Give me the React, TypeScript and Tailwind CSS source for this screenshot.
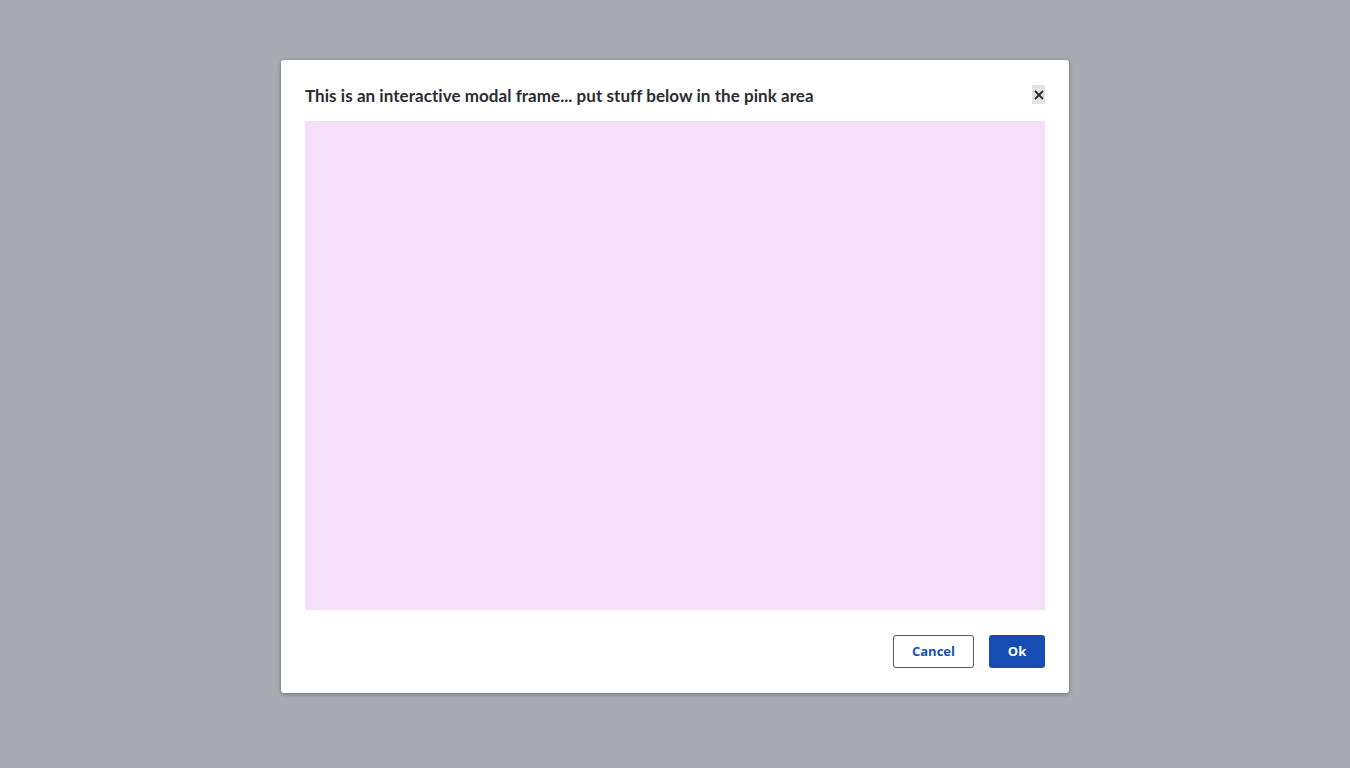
import React from "react";

export default function App() {
  return (
    <div className="w-[1350px] h-[768px] bg-[#a8abb3] pt-[60px]" style={{ fontFamily: "Lato, 'Liberation Sans', sans-serif" }}>
      <div className="ml-[281px] w-[788px] h-[633px] bg-white rounded-[3px] shadow-[0_1px_4px_rgba(0,0,0,0.35)] flex flex-col px-[24px]">
        <div className="flex items-start justify-between pt-[25px] h-[61px]">
          <h2 className="text-[17px] font-bold text-[#2a2d35] leading-[22px] tracking-[0.05px]">
            This is an interactive modal frame... put stuff below in the pink area
          </h2>
          <button className="w-[13px] h-[19px] bg-[#e3e3e3] flex items-center justify-center text-[#2a2d35]">
            <svg width="10" height="10" viewBox="0 0 10 10" fill="none" stroke="currentColor" strokeWidth="1.8">
              <path d="M1 1L9 9M9 1L1 9" />
            </svg>
          </button>
        </div>
        <div className="h-[489px] bg-[#f4e0f9]" />
        <div className="flex justify-end gap-[15px] mt-[25px]" style={{ fontFamily: "'Open Sans', 'Noto Sans', sans-serif" }}>
          <button className="w-[81px] h-[33px] border border-[#55585e] rounded-[3px] text-[#1a4fb5] text-[13px] font-bold bg-white">
            Cancel
          </button>
          <button className="w-[56px] h-[33px] rounded-[3px] bg-[#164db3] text-white text-[13px] font-bold">
            Ok
          </button>
        </div>
      </div>
    </div>
  );
}
